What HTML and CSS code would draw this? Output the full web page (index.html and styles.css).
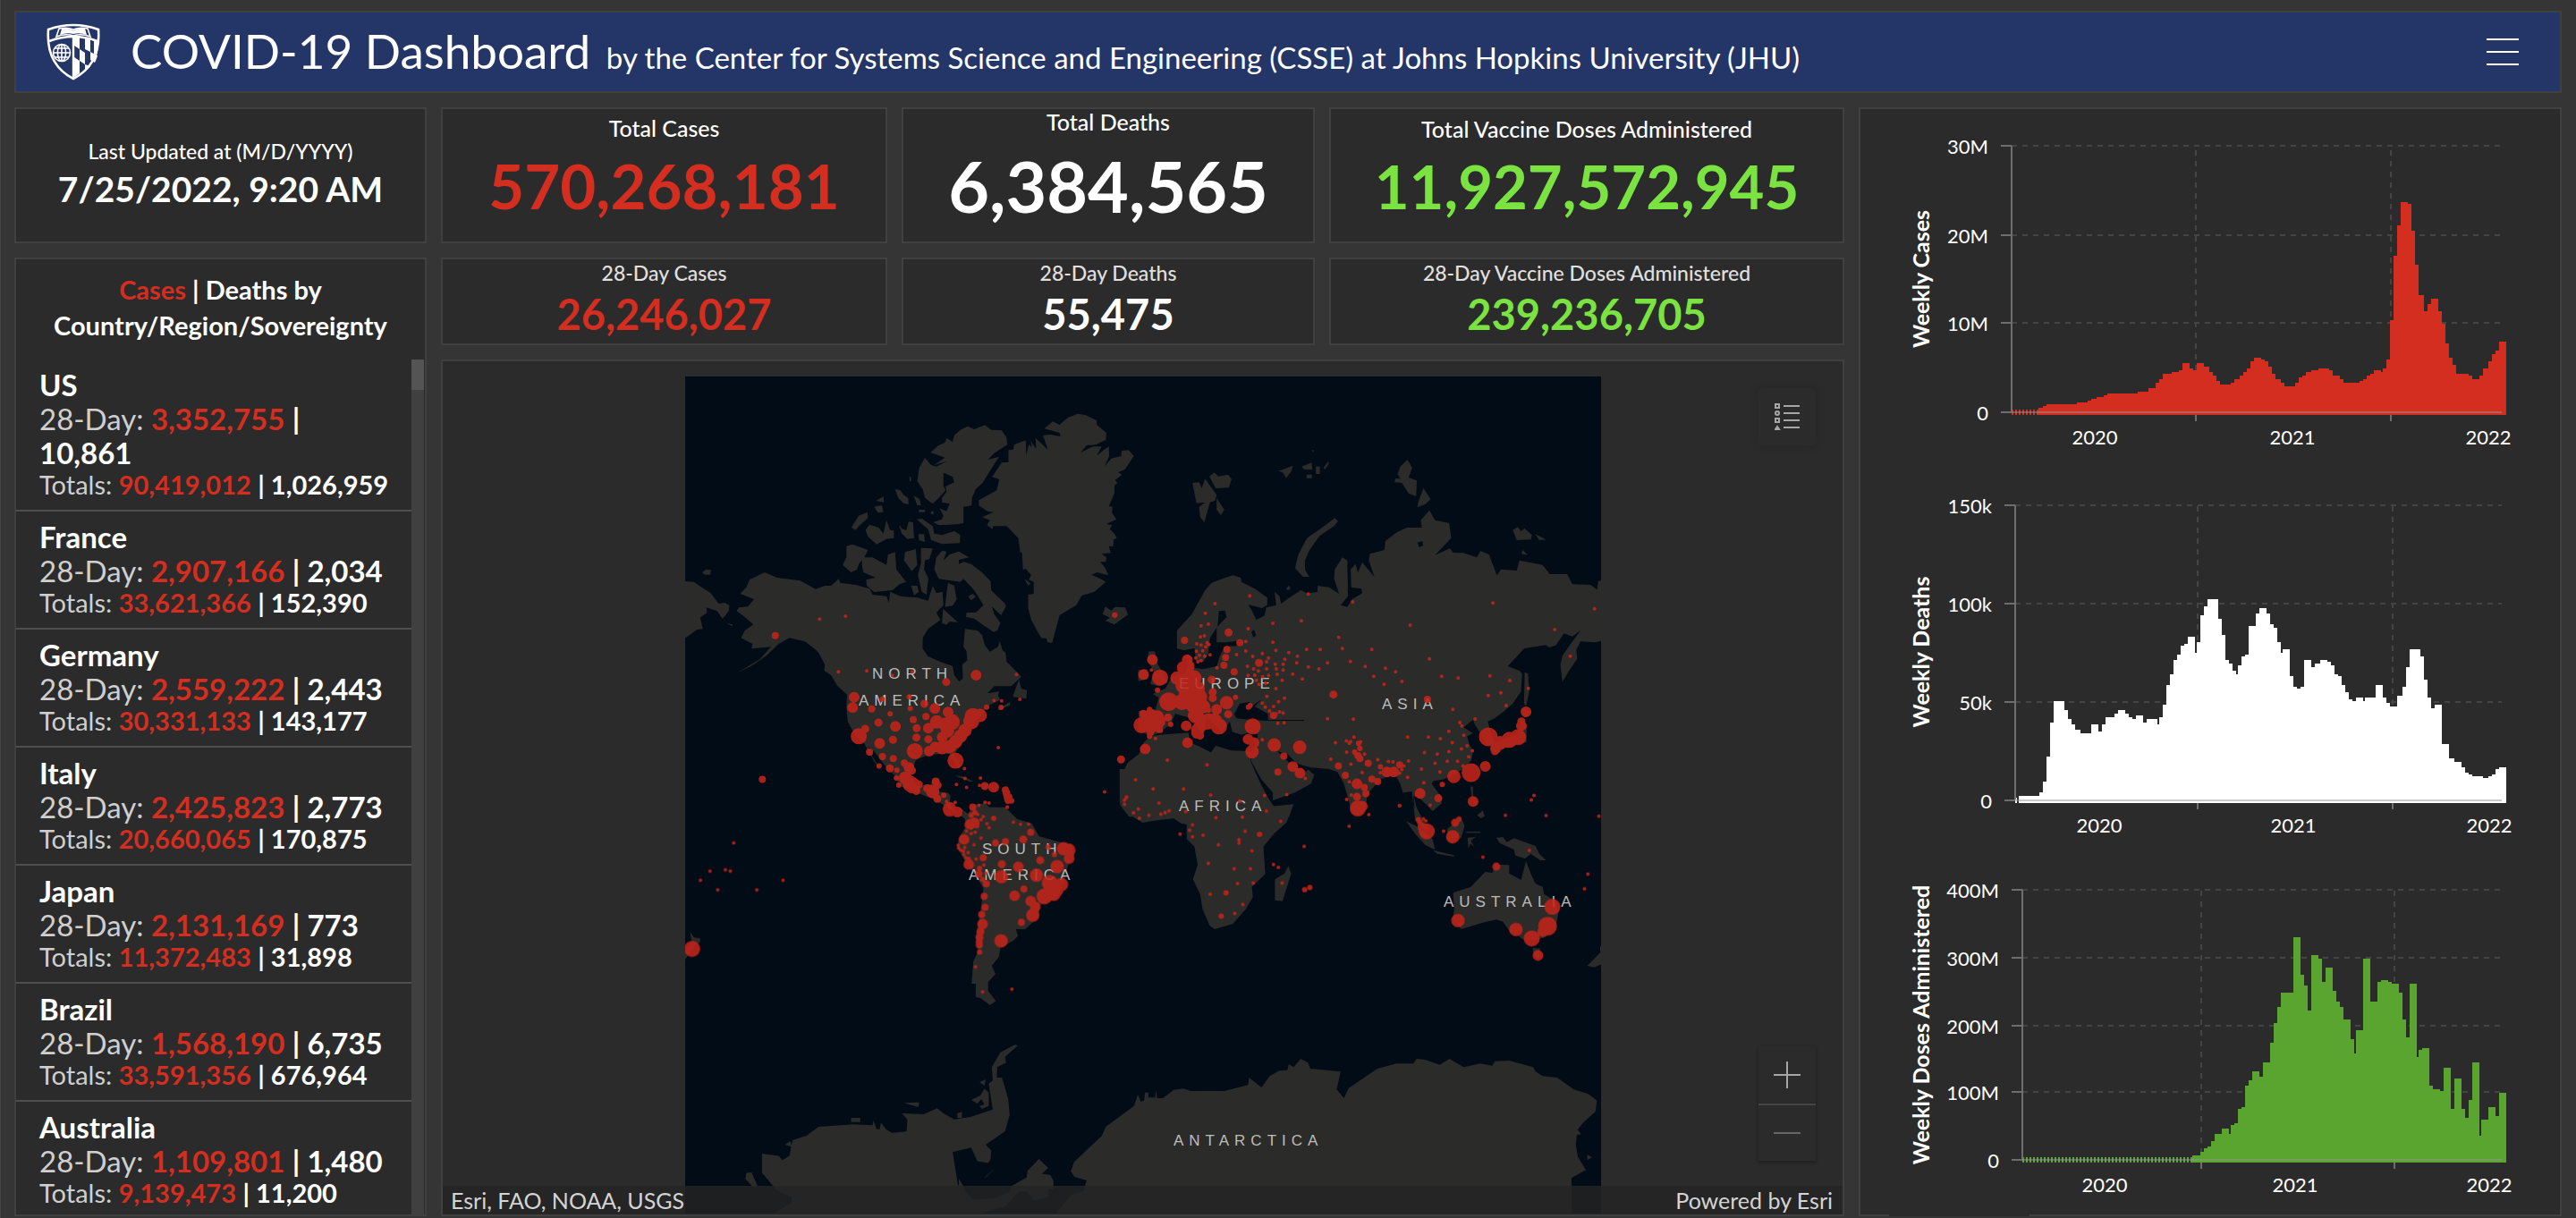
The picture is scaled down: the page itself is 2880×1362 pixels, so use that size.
FILE: index.html
```html
<!DOCTYPE html>
<html lang="en">
<head>
<meta charset="utf-8">
<meta name="viewport" content="width=device-width, initial-scale=1">
<title>COVID-19 Dashboard</title>
<link rel="stylesheet" href="styles.css">
</head>
<body>
<div class="dashboard">
  <header class="topbar">
    <svg class="logo" viewBox="0 0 62 64" aria-hidden="true">
      <path d="M3 7Q31-3 59 7Q62 46 31 62Q0 46 3 7Z" fill="none" stroke="#fff" stroke-width="2.6"/>
      <path d="M4 20Q31 10 58 20" fill="none" stroke="#fff" stroke-width="2.4"/>
      <path d="M12 15L15 6Q24 4 31 7Q38 4 47 6L50 15Q40 11 31 14Q22 11 12 15Z" fill="none" stroke="#fff" stroke-width="1.6"/>
      <path d="M16 13L18 6Q25 5 31 8Q37 5 44 6L46 13Q38 10 31 12Q24 10 16 13Z" fill="#fff"/>
      <path d="M31 16V61" stroke="#fff" stroke-width="2.4"/>
      <g fill="none" stroke="#fff" stroke-width="1.6"><circle cx="18" cy="33" r="9.5"/><ellipse cx="18" cy="33" rx="4.6" ry="9.5"/><path d="M18 23.500V42.500M8.500 33H27.500M10 28H26M10 38H26"/></g>
      <path d="M32 16L38 16V29L32 25ZM44 17L50 18V32L44 29ZM38 29L44 33V46L38 42ZM50 32L58 36Q57 40 55 44L50 41ZM32 38L38 42V56L32 60ZM44 46L50 48Q48 51 44 54ZM54 19L58 20Q59 30 57 36L54 34Z" fill="#fff"/>
    </svg>
    <h1 class="title">COVID-19 Dashboard <small class="subtitle">by the Center for Systems Science and Engineering (CSSE) at Johns Hopkins University (JHU)</small></h1>
    <button class="menu" type="button" aria-label="Menu"><span></span><span></span><span></span></button>
  </header>

  <section class="panel updated">
    <p class="updated-label">Last Updated at (M/D/YYYY)</p>
    <p class="updated-value">7/25/2022, 9:20 AM</p>
  </section>

  <section class="panel kpi"><h2 class="kpi-label">Total Cases</h2><p class="kpi-value size-m red">570,268,181</p></section>
  <section class="panel kpi"><h2 class="kpi-label">Total Deaths</h2><p class="kpi-value size-l">6,384,565</p></section>
  <section class="panel kpi"><h2 class="kpi-label">Total Vaccine Doses Administered</h2><p class="kpi-value size-s green">11,927,572,945</p></section>

  <section class="panel kpi recent"><h2 class="kpi-label">28-Day Cases</h2><p class="kpi-value red">26,246,027</p></section>
  <section class="panel kpi recent"><h2 class="kpi-label">28-Day Deaths</h2><p class="kpi-value">55,475</p></section>
  <section class="panel kpi recent"><h2 class="kpi-label">28-Day Vaccine Doses Administered</h2><p class="kpi-value green">239,236,705</p></section>

  <section class="panel countries">
    <h2 class="countries-title"><span class="red">Cases</span> | Deaths by<br>Country/Region/Sovereignty</h2>
    <div class="countries-body">
      <ul class="country-list">
        <li><h3>US</h3><p class="recent-line">28-Day: <b class="red">3,352,755</b> <b>|<br>10,861</b></p><p class="total-line">Totals: <b class="red">90,419,012</b> <b>| 1,026,959</b></p></li>
        <li><h3>France</h3><p class="recent-line">28-Day: <b class="red">2,907,166</b> <b>| 2,034</b></p><p class="total-line">Totals: <b class="red">33,621,366</b> <b>| 152,390</b></p></li>
        <li><h3>Germany</h3><p class="recent-line">28-Day: <b class="red">2,559,222</b> <b>| 2,443</b></p><p class="total-line">Totals: <b class="red">30,331,133</b> <b>| 143,177</b></p></li>
        <li><h3>Italy</h3><p class="recent-line">28-Day: <b class="red">2,425,823</b> <b>| 2,773</b></p><p class="total-line">Totals: <b class="red">20,660,065</b> <b>| 170,875</b></p></li>
        <li><h3>Japan</h3><p class="recent-line">28-Day: <b class="red">2,131,169</b> <b>| 773</b></p><p class="total-line">Totals: <b class="red">11,372,483</b> <b>| 31,898</b></p></li>
        <li><h3>Brazil</h3><p class="recent-line">28-Day: <b class="red">1,568,190</b> <b>| 6,735</b></p><p class="total-line">Totals: <b class="red">33,591,356</b> <b>| 676,964</b></p></li>
        <li><h3>Australia</h3><p class="recent-line">28-Day: <b class="red">1,109,801</b> <b>| 1,480</b></p><p class="total-line">Totals: <b class="red">9,139,473</b> <b>| 11,200</b></p></li>
      </ul>
      <div class="scrollbar"><div class="thumb"></div></div>
    </div>
  </section>

  <section class="panel map">
    <svg class="world" viewBox="0 0 1024 936" role="img" aria-label="World map of cases">
      <rect width="1024" height="936" fill="#020c17"/>
      <g fill="#2b2b29">
        <g transform="matrix(.3444 0 0 .3333 -16 -11)">
          <path d="M1320 158L1345 162 1382 180 1383 195 1414 222 1412 245 1380 262 1350 264 1330 288 1370 268 1398 268 1384 298 1405 280 1422 268 1423 300 1408 334 1430 308 1462 300 1464 282 1486 280 1503 300 1474 345 1452 355 1465 362 1442 380 1450 390 1440 398 1440 425 1422 468 1434 470 1432 490 1446 512 1414 528 1432 532 1425 545 1440 560 1448 575 1438 580 1436 604 1422 602 1428 625 1398 628 1414 640 1412 655 1394 655 1410 675 1420 700 1384 690 1365 698 1395 712 1412 722 1375 755 1334 768 1316 800 1262 834 1250 880 1238 927 1222 924 1220 912 1202 910 1170 850 1160 810 1160 765 1178 762 1178 722 1162 715 1170 700 1152 678 1143 682 1140 625 1134 622 1128 575 1090 535 1046 535 1044 545 1026 532 1036 515 1010 505 1048 488 1028 485 1000 466 1000 448 1058 415 1066 378 1043 370 1074 322 1096 320 1096 280 1112 278 1114 262 1152 247 1154 298 1162 262 1172 270 1168 250 1186 275 1184 240 1224 278 1208 230 1232 228 1265 234 1262 222 1212 208 1240 184 1262 195 1278 180 1290 170Z"/>
          <path d="M964 200L985 210 1020 196 1040 212 1074 214 1090 238 1092 262 1050 290 1030 312 1066 302 1042 340 1012 390 990 410 978 440 976 466 950 470 950 525 935 528 905 530 870 532 852 522 880 512 885 500 872 475 895 485 905 460 880 455 880 440 895 420 892 402 920 388 915 370 890 358 885 358 885 400 892 415 870 440 850 460 825 440 818 412 800 385 806 340 825 306 845 330 862 335 895 318 855 330 890 305 843 288 868 265 890 255 895 240 915 252 920 230 940 212Z"/>
          <path d="M728 410L745 415 755 430 770 440 772 462 755 458 738 440ZM788 432L808 445 812 465 800 465ZM666 450L690 436 692 455ZM660 470L685 465 690 488 672 490ZM586 540L610 500 638 488 640 508 615 530 600 548ZM632 548L645 530 675 540 690 560 700 515 712 548 724 550 724 575 700 578 668 596 640 570ZM740 530L752 545 765 548 772 520 786 522 790 575 768 578 750 560ZM798 512L815 510 850 535 855 560 880 565 920 552 940 565 938 592 880 595 845 582 835 545ZM804 562L822 562 825 588 806 582ZM805 480H825V488H805ZM775 370h5v14h-5zM845 485h8v10h-8z"/>
          <path d="M570 602L590 596 640 615 628 640 610 662 605 680 585 690 558 665 570 640ZM622 640L655 640 700 665 705 630 728 622 732 680 764 722 742 730 720 750 660 756 636 735 634 715 665 708 625 690 620 665ZM760 622L795 612 800 665 782 686 757 650ZM812 608L850 610 840 645 825 650 822 680 836 710 830 765 815 755 802 700 812 660ZM880 618L895 620 885 650 905 630 935 620 968 640 935 648 935 662 950 655 975 662 1010 690 1038 720 1040 750 1085 795 1088 805 1072 834 1042 805 1050 830 1070 860 1060 885 1048 890 1015 868 985 845 958 840 960 825 990 825 1015 800 985 750 950 712 940 722 870 712 855 680 862 640ZM900 725L920 735 928 780 915 802 890 806 895 760ZM884 812L932 858 905 855 895 866 880 860ZM965 770l15-8 10 10-15 12zM780 735l20 0 5 20-15 12z"/>
          <path d="M305 690L345 708 420 718 470 746 500 735 520 735 545 712 550 725 600 732 645 745 655 765 700 770 708 792 712 755 745 770 800 775 835 785 850 735 862 760 882 755 885 800 862 825 875 850 835 880 818 910 817 945 835 972 880 992 915 1004 920 1035 936 1056 948 1046 946 1000 962 985 960 955 950 940 955 880 995 885 1010 900 1020 935 1036 956 1062 940 1068 920 1076 950 1087 960 1090 990 1100 1000 1138 1040 1105 1072 1050 1072 1028 1096 1066 1090 1062 1105 1070 1118 1025 1140 1010 1170 990 1190 960 1240 935 1280 920 1300 940 1340 935 1350 905 1300 860 1300 830 1305 795 1320 780 1370 800 1408 845 1400 850 1380 872 1382 865 1425 900 1430 908 1440 905 1470 930 1500 965 1500 980 1520 960 1520 930 1500 885 1470 850 1450 800 1430 740 1405 730 1375 700 1345 660 1290 640 1275 655 1310 690 1365 660 1325 628 1265 600 1240 574 1190 570 1140 572 1100 540 1070 520 1035 498 1020 500 1000 480 960 465 945 435 922 385 910 350 930 310 970 260 1005 218 1026 290 980 325 940 262 946 265 930 228 910 240 885 268 865 240 840 214 820 220 808 250 805 270 780 225 762 245 740 255 715Z"/>
          <path d="M1112 1100L1130 1050 1138 1080 1156 1086 1154 1114 1112 1108ZM1060 1150L1102 1124 1100 1136 1065 1152ZM922 1372L950 1375 982 1392 970 1392ZM46 720L75 722 100 740 130 760 155 795 175 792 190 800 188 820 168 846 150 820 115 808 118 825 95 842 104 880 85 882 46 912ZM102 690L115 680 130 682 128 698 110 698ZM1410 805L1430 818 1442 806 1475 808 1484 832 1440 865 1410 852 1425 842 1402 830ZM180 860l20 5v6zM1148 712l20 15-8 8z"/>
        </g>
        <g transform="matrix(.3699 0 0 .3333 474 -11)">
          <path d="M252 390L272 388 280 408 290 376 325 430 320 450 305 455 288 522 275 505 272 470 290 455 264 458ZM303 368L318 355 330 368 360 362 370 378 362 406 322 408ZM325 440L348 480 338 498 325 480ZM512 350L556 332 550 352 535 374 525 355ZM582 335L612 322 614 345 590 345ZM625 335h12v25h-12zM648 340L662 318 664 326 652 345ZM597 362h16v12h-16zM612 280l6 0v8zM902 312L916 340 905 372 930 382 928 435 905 425 885 390 863 388 865 375 880 376 872 360 880 335ZM950 408L972 445 955 462 932 472 934 455ZM682 508L692 518 680 535 636 568 606 615 592 650 592 680 605 706 585 704 562 676 572 630 598 575 650 535ZM1220 548L1235 538 1245 552 1255 542 1278 565 1275 580 1232 582ZM1288 562L1320 580 1300 582ZM1250 615L1265 632 1246 628ZM535 745l8-10 6 8-8 8z"/>
          <path d="M375 700L398 708 400 722 440 745 478 775 478 800 462 810 420 798 430 815 445 850 470 835 475 808 505 800 500 755 515 770 520 795 545 775 580 750 600 762 630 755 630 735 665 740 695 762 680 710 682 680 705 640 720 650 722 770 700 800 720 806 735 780 765 760 762 745 732 740 730 680 745 662 752 690 765 656 802 706 785 650 788 628 832 615 835 585 870 555 900 540 945 540 942 515 968 482 985 515 1028 525 1034 575 985 632 1030 610 1040 624 1070 625 1112 640 1122 618 1148 630 1172 700 1185 680 1232 684 1240 650 1310 665 1332 696 1385 696 1400 730 1455 732 1475 748 1478 720 1487 718V920L1470 925 1425 922 1412 950 1415 980 1390 1020 1370 1058 1364 1000 1370 970 1395 930 1425 885 1400 905 1375 895 1350 935 1330 942 1320 934 1255 945 1205 1005 1240 1020 1248 1030 1245 1090 1220 1130 1195 1155 1165 1180 1145 1190 1150 1215 1165 1265 1140 1270 1125 1235 1105 1200 1100 1185 1072 1210 1100 1230 1082 1240 1088 1265 1100 1290 1095 1320 1070 1350 1030 1375 1010 1385 980 1390 975 1400 1005 1445 1005 1465 978 1492 960 1470 940 1450 920 1440 920 1470 935 1520 925 1520 915 1425 888 1430 880 1400 868 1375 850 1372 820 1385 780 1435 775 1490 755 1505 735 1500 720 1440 710 1400 690 1360 665 1350 610 1345 590 1340 600 1350 620 1370 610 1400 560 1430 495 1455 495 1430 460 1385 430 1325 425 1300 440 1270 450 1235 430 1225 400 1235 372 1225 365 1190 340 1230 310 1190 295 1165 285 1240 250 1180 200 1165 185 1200 150 1230 120 1240 88 1215 90 1155 140 1150 150 1110 132 1098 170 1080 190 1040 230 1030 240 1000 230 970 250 975 255 1010 285 1015 325 1005 335 970 350 938 400 936 400 918 355 925 325 925 325 875 355 840 350 818 332 820 328 870 305 910 300 960 285 990 262 985 258 945 225 952 205 945 205 885 250 830 290 750 310 725 345 710Z"/>
          <path d="M150 1235L240 1228 245 1262 270 1272 308 1295 322 1272 370 1288 425 1290 428 1325 470 1430 497 1475 555 1468 545 1510H60L33 1470V1385L55 1330 90 1300 105 1260 125 1240ZM120 955L138 955 148 1000 178 1060 150 1072 125 1065 135 1020 115 985ZM88 1018L115 1015 118 1048 88 1055ZM1248 1180L1262 1200 1262 1260 1205 1275 1165 1300 1150 1270 1200 1245 1235 1235ZM1245 1145L1278 1158 1255 1178ZM1256 1025L1266 1030 1270 1090 1260 1140 1254 1130ZM1092 1408L1100 1410 1100 1440 1115 1470 1098 1465Z"/>
          <path d="M378 1165L395 1130 425 1125 430 1140 462 1115 440 1140 480 1165 480 1185H589V1188H480L430 1185 385 1180ZM508 1290L540 1300 565 1330 605 1345 595 1360 570 1345 545 1330ZM932 590l15-5 2 15-12 6zM430 890l8-8 6 20-8 6z" fill="#020c17"/>
        </g>
        <g transform="matrix(.3444 0 0 .3333 -16 439)">
          <path d="M945 135L965 150 985 120 1020 115 1035 128 1085 128 1125 168 1172 182 1195 225 1245 240 1300 255 1310 290 1290 320 1270 400 1255 430 1200 455 1190 500 1150 538 1120 536 1127 560 1112 575 1070 600 1065 630 1042 660 1054 688 1030 715 1030 745 1055 778 1036 792 1005 768 990 765 990 720 976 720 982 645 998 610 990 560 1005 480 1015 400 985 350 955 310 930 260 935 230 960 190ZM62 545L75 565 95 568 95 580 80 590 46 640V610L68 580Z"/>
          <path d="M296 1290L350 1298 362 1312 385 1298 395 1245 440 1230 480 1200 590 1192 655 1195 658 1178 668 1208 678 1208 682 1186 700 1210 718 1220 765 1216 768 1175 750 1155 820 1158 865 1138 885 1155 920 1175 975 1166 1045 1142 1032 1055 1045 1045 1042 1000 1070 950 1118 924 1126 928 1085 965 1088 985 1060 1000 1058 1035 1075 1035 1095 1105 1100 1160 1085 1215 1022 1260 1040 1280 1038 1310 1030 1322 995 1316 975 1270 915 1285 932 1395 950 1410 980 1445 1050 1440 1100 1420 1105 1400 1155 1370 1158 1348 1195 1308 1225 1338 1205 1358 1232 1362 1242 1382V1408L1225 1410V1435L1182 1448 1155 1416 1130 1418 1085 1468 1010 1488V1500H320L392 1455V1435L345 1415 296 1355ZM756 1120L806 1118 804 1134ZM585 1170h30v14h-30zM245 1355L262 1353 282 1400 268 1404 242 1375ZM975 1110L1005 1095 1018 1072 1032 1085V1130L1010 1140 1002 1130 1018 1125 1008 1108 995 1122ZM1018 1370L1055 1338 1022 1370ZM370 1260l18-12 5 20zM1002 1050l20-8-4 20zM935 1375l22 35h-22zM930 1155l15-5v20h-15z"/>
        </g>
        <g transform="matrix(.5357 0 0 .3333 474 439)">
          <path d="M22 0V110L50 160 70 180 100 172 135 166 150 182 162 185V235L178 260 185 320 175 370 190 420 195 470 210 525 220 537 258 520 285 470 300 430 298 395 326 352 322 260 345 215 370 180 385 118 345 130 335 105 300 0ZM374 325L380 350 362 443 346 440V370L366 350ZM636 90L642 130 655 170 668 200 660 205 645 180 638 140ZM620 175L640 190 675 235 680 270 660 255 640 220ZM676 272L722 290 718 293 685 284ZM706 200L735 165 742 190 735 230 715 250 705 235ZM748 230L765 228 755 240 762 262 754 250 750 268ZM745 210h30v4h-30zM768 155L780 138 784 158 776 165ZM808 230L822 228 830 245 845 232 890 258 898 285 912 306 900 306 880 285 868 300 848 290 845 270 815 248ZM870 308L880 350 890 385 905 395 908 420 930 440 938 480 932 530 910 565 880 575 862 570 845 545 838 550 822 512 808 505 780 515 735 537 718 500 720 470 718 415 755 395 770 370 785 345 800 348 805 320 835 322V350L860 372ZM884 600L900 602 896 635 886 625ZM1027 612V655L1012 665 998 660Z"/>
          <path d="M-116 1500L-80 1430-53 1416-47 1380-72 1368-80 1350-73 1318-15 1230-7 1200 52 1130 60 1092 66 1115 73 1112 75 1085 82 1085 82 1102 96 1102 98 1075 100 1104 112 1104 135 1076 155 1072 170 1080 240 1080 290 1060 292 1035 318 1068 335 1030 355 1012 372 1010 375 990 385 1000 400 972 415 985 420 1005 483 1015 475 1075 490 1104 500 1070 560 1005 600 988 635 988 642 972 660 975 690 992 710 972 740 1000 775 988 800 995 805 980 835 978 885 1000 890 1015 905 1030 935 1035 970 1075 1000 1090 1018 1112 1015 1150 990 1185 978 1210 985 1225 976 1228 974 1260 978 1300 995 1345 965 1372 966 1500ZM998 1294l10 8-10 10z"/>
        </g>
      </g>
      <g class="continents">
        <text x="209" y="338">NORTH</text><text x="194" y="368">AMERICA</text>
        <text x="552" y="349">EUROPE</text><text x="779" y="372">ASIA</text>
        <text x="552" y="486">AFRICA</text><text x="332" y="534">SOUTH</text><text x="317" y="563">AMERICA</text>
        <text x="848" y="593">AUSTRALIA</text><text x="546" y="860">ANTARCTICA</text>
      </g>
      <g class="dots">
        <g transform="matrix(.3444 0 0 .3333 -16 -11)">
          <path class="s1" d="M483 847h.1M567 837h.1M544 1024h.1M636 1021h.1M719 1036h.1M783 1024h.1M1122 1033h.1M1133 1116h.1M1063 1278h.1M1049 1120h.1M1074 1121h.1M953 1349h.1M955 1382h.1M1005 1380h.1M927 1402h.1M960 1412h.1M1408 1427h.1M1002 1405h.1M1020 1462h.1M1033 1464h.1M1092 1478h.1M923 1462h.1M895 1459h.1M1000 1472h.1"/>
          <path class="s2" d="M1441 833h.1M686 1115h.1M774 1108h.1M712 1165h.1M777 1147h.1M1025 1142h.1M1072 1143h.1M676 1340h.1M734 1354h.1M1106 1457h.1M886 1438h.1M732 1380h.1M740 1404h.1"/>
          <path class="s3" d="M339 902h.1M297 1385h.1M652 1148h.1M787 1184h.1M828 1174h.1M687 1308h.1M722 1315h.1M645 1293h.1M758 1330h.1M980 1478h.1M1090 1430h.1M1097 1444h.1M1086 1420L1095 1455"/>
          <path class="s4" d="M894 1058h.1M674 1194h.1M798 1213h.1M823 1131h.1M797 1244h.1M836 1250h.1M721 1252h.1M711 1348h.1M631 1215h.1M783 1355h.1M1019 1407h.1M860 1392h.1M866 1404h.1M805 1402h.1M832 1415h.1M797 1424h.1M755 1375h.1M865 1450h.1"/>
          <path class="s5" d="M595 1109h.1M590 1144h.1M991 1035h.1M857 1147h.1M900 1159h.1M836 1213h.1M678 1264h.1M729 1207h.1M839 1290h.1M881 1243h.1M773 1345h.1M1048 1411h.1M858 1276h.1M930 1494h.1"/>
          <path class="s6" d="M863 1192h.1M880 1278h.1M905 1275h.1M925 1258h.1M940 1240h.1M955 1220h.1M898 1222h.1M762 1380h.1M850 1425h.1M905 1483h.1M1004 1170h.1M890 1200h.1"/>
          <path class="s7" d="M610 1240h.1M792 1290h.1M924 1322h.1M980 1172h.1M975 1190h.1M778 1400h.1M912 1192h.1M785 1405h.1"/>
        </g>
        <g transform="matrix(.3699 0 0 .3333 474 -11)">
          <path class="s1" d="M425 769h.1M320 795h.1M291 827h.1M278 869h.1M300 864h.1M602 763h.1M736 789h.1M1160 793h.1M1467 812h.1M910 867h.1M1347 882h.1M495 861h.1M581 853h.1M420 879h.1M694 908h.1M276 907h.1M288 903h.1M265 930h.1M278 934h.1M292 940h.1M302 932h.1M296 926h.1M264 955h.1M283 953h.1M273 968h.1M289 971h.1M305 967h.1M268 990h.1M278 986h.1M262 977h.1M385 966h.1M413 922h.1M413 954h.1M434 972h.1M463 962h.1M482 977h.1M504 952h.1M495 925h.1M531 982h.1M543 959h.1M569 971h.1M597 949h.1M638 949h.1M705 946h.1M794 949h.1M968 980h.1M1394 971h.1M476 990h.1M502 998h.1M526 998h.1M567 994h.1M602 1007h.1M660 994h.1M729 989h.1M774 1006h.1M634 1014h.1M835 1012h.1M866 1024h.1M418 1005h.1M437 1014h.1M451 1021h.1M476 1014h.1M505 1014h.1M526 1018h.1M555 1031h.1M508 1032h.1M482 1036h.1M464 1040h.1M440 1035h.1M420 1036h.1M523 1052h.1M584 1048h.1M445 1052h.1M473 1062h.1M453 1066h.1M504 1080h.1M477 1106h.1M530 1112h.1M512 1124h.1M463 1129h.1M472 1142h.1M497 1140h.1M485 1155h.1M515 1158h.1M526 1162h.1M505 1165h.1M800 1039h.1M831 1066h.1M885 1056h.1M1005 1039h.1M1055 1045h.1M1151 1037h.1M1211 1053h.1M1184 1094h.1M1146 1103h.1M1200 1137h.1M1267 1079h.1M1039 1150h.1M1106 1182h.1M738 1183h.1M660 1181h.1M510 1196h.1M529 1195h.1M1060 1194h.1M1066 1205h.1M1027 1223h.1M1072 1237h.1M1001 1248h.1M965 1243h.1M902 1243h.1M1037 1262h.1M1082 1272h.1M1065 1283h.1M1098 1289h.1M1027 1292h.1M992 1300h.1M953 1295h.1M1087 1309h.1M1053 1324h.1M1022 1324h.1M985 1331h.1M944 1350h.1M905 1323h.1M1000 1360h.1M951 1396h.1M1070 1340h.1M463 1252h.1M684 1262h.1M717 1256h.1M740 1243h.1M726 1264h.1M730 1258h.1M760 1259h.1M718 1293h.1M772 1300h.1M731 1334h.1M670 1317h.1M812 1319h.1M844 1325h.1M858 1326h.1M765 1362h.1M726 1393h.1M902 1378h.1M878 1364h.1M891 1340h.1M885 1352h.1M820 1362h.1M718 1452h.1M732 1437h.1M878 1473h.1M1284 1439h.1M1276 1454h.1M176 1320h.1M296 1336h.1M80 1386h.1M133 1417h.1M225 1417h.1M307 1437h.1M396 1458h.1M470 1439h.1M537 1436h.1M593 1382h.1M140 1247h.1M53 1444h.1M326 1010h.1M128 1018h.1"/>
          <path class="s2" d="M17 833h.1M146 1085h.1M186 1200h.1M382 1109h.1M426 1137h.1M421 1142h.1M1007 1402h.1M758 1281h.1M754 1264h.1M742 1293h.1M300 1152h.1M820 1343h.1M122 1240h.1M155 1220h.1M122 1150h.1"/>
          <path class="s3" d="M228 918h.1M356 949h.1M347 1002h.1M378 1024h.1M352 976h.1M395 926h.1M693 1340h.1M714 1371h.1M812 1392h.1M776 1433h.1M510 1360h.1M528 1307h.1M783 1331h.1M878 1336h.1M794 1384h.1M497 1170h.1M752 1305h.1M758 1315h.1M771 1412h.1M962 1116h.1M125 1228h.1"/>
          <path class="s4" d="M361 892h.1M453 994h.1M678 1100h.1M310 1050h.1M360 1166h.1M313 1092h.1M313 1112h.1M995 1448h.1M36 1318h.1M749 1443h.1M103 1165h.1M1166 1290h.1M150 1215h.1M178 1177h.1M1246 1190h.1M275 1238h.1"/>
          <path class="s5" d="M104 1033h.1M131 983h.1M940 1432h.1M749 1400h.1M840 1360h.1M860 1360h.1M438 1262h.1M325 1150h.1M1246 1205h.1M1100 1459h.1M237 1262h.1M109 1283h.1M577 1364h.1M555 1342h.1M236 983h.1M1137 1341h.1M1260 1158h.1M420 1250h.1M233 1205h.1M265 1230h.1M1168 1282h.1M765 1475h.1M125 1165h.1"/>
          <path class="s6" d="M1042 1375h.1M499 1269h.1M576 1277h.1M355 1127h.1M432 1292h.1M120 1190h.1M150 1190h.1M145 1175h.1M225 1010h.1M238 1005h.1M205 1045h.1M1182 1262h.1M1205 1256h.1M285 1140h.1M268 1218h.1M125 1208h.1"/>
          <path class="s7" d="M154 1043h.1M434 1207h.1M98 1203h.1M240 1040h.1M255 1045h.1M225 1070h.1M265 1080h.1M235 1100h.1M272 1108h.1M220 1125h.1M255 1135h.1M250 1070h.1M262 1170h.1M280 1195h.1M300 1190h.1M332 1207h.1M318 1190h.1M1236 1243h.1M1210 1252h.1"/>
          <path class="s8" d="M1094 1362h.1M180 1124h.1M1146 1242h.1"/>
        </g>
        <g transform="matrix(.3444 0 0 .3333 -16 439)">
          <path class="s1" d="M204 248h.1M177 338h.1M193 342h.1M127 342h.1M96 373h.1M152 405h.1M279 405h.1M364 373h.1M1107 738h.1M1012 747h.1M989 663h.1M1112 178h.1M1135 185h.1M1161 185h.1M1014 159h.1M1007 170h.1M1026 183h.1M1033 197h.1M1007 231h.1M984 254h.1M965 280h.1M951 287h.1M991 302h.1M1016 322h.1M1022 350h.1M960 208h.1M975 216h.1M988 212h.1M954 263h.1M940 272h.1M933 255h.1M934 265h.1M1092 128h.1M975 198h.1M996 152h.1M950 275h.1M958 297h.1M968 300h.1"/>
          <path class="s2" d="M1048 165h.1M1225 262h.1M1245 287h.1M1002 333h.1M1002 614h.1M980 128h.1M987 146h.1M975 155h.1M1105 106h.1M1012 370h.1M993 190h.1"/>
          <path class="s3" d="M1138 514h.1M1017 427h.1M1020 464h.1M1009 488h.1M1146 402h.1M1168 212h.1M1024 385h.1M1000 352h.1M1054 248h.1M1086 243h.1M1014 297h.1M1001 590h.1M1001 580h.1"/>
          <path class="s4" d="M1074 319h.1M1144 236h.1M1199 306h.1M1005 545h.1M930 147h.1M1002 565h.1M966 187h.1"/>
          <path class="s5" d="M1128 328h.1M1116 425h.1M952 236h.1M967 320h.1M972 185h.1M985 180h.1M1168 443h.1M1183 462h.1M1012 520h.1M1293 300h.1"/>
          <path class="s6" d="M905 137h.1M1073 361h.1M1187 356h.1M1254 327h.1M1072 576h.1M1175 490h.1M1268 387h.1M1243 420h.1M1292 272h.1M1275 267h.1"/>
          <path class="s7" d="M69 603h.1M1230 382h.1M1213 427h.1M1240 395h.1M1248 405h.1"/>
        </g>
        <g transform="matrix(.5357 0 0 .3333 474 439)">
          <path class="s1" d="M272 108h.1M36 95h.1M32 104h.1M32 118h.1M104 114h.1M61 134h.1M51 147h.1M83 155h.1M108 151h.1M117 146h.1M125 140h.1M160 142h.1M63 165h.1M223 163h.1M278 161h.1M328 141h.1M358 175h.1M174 187h.1M168 205h.1M174 227h.1M196 222h.1M148 218h.1M284 208h.1M228 254h.1M271 237h.1M271 248h.1M298 274h.1M207 316h.1M261 334h.1M295 334h.1M268 384h.1M301 382h.1M361 382h.1M211 420h.1M279 454h.1M262 484h.1M343 320h.1M353 330h.1M407 259h.1M501 192h.1M606 123h.1M670 121h.1M827 155h.1M912 156h.1M1022 158h.1M780 295h.1M999 352h.1M992 402h.1M877 273h.1M698 208h.1M542 153h.1M656 167h.1M661 174h.1"/>
          <path class="s2" d="M314 219h.1M244 415h.1M234 493h.1M408 405h.1M419 397h.1M730 168h.1M645 170h.1M648 178h.1"/>
          <path class="s4" d="M808 327h.1M722 180h.1M652 192h.1"/>
          <path class="s5" d="M895 625h.1M905 545h.1M656 200h.1"/>
          <path class="s6" d="M717 227h.1M728 508h.1M849 538h.1"/>
          <path class="s7" d="M663 209h.1M882 568h.1M925 462h.1M519 132h.1M1042 603h.1"/>
          <path class="s8" d="M915 527h.1"/>
        </g>
      </g>
    </svg>
    <button class="map-button legend" type="button" aria-label="Legend">
      <svg viewBox="0 0 28 30" width="28" height="30" aria-hidden="true" fill="none" stroke="#a6a6a6" stroke-width="2"><path d="M1 1H5V5H1ZM1 17H5V21H1ZM10 3H28M10 11H28M10 19H28M10 27H28"/><circle cx="3" cy="11" r="2"/><path d="M3 26L5 29H1Z"/></svg>
    </button>
    <div class="zoom">
      <button class="map-button" type="button" aria-label="Zoom in"><svg viewBox="0 0 30 30" width="30" height="30" aria-hidden="true"><path d="M15 0V30M0 15H30" stroke="#a6a6a6" stroke-width="2"/></svg></button>
      <button class="map-button" type="button" aria-label="Zoom out" disabled><svg viewBox="0 0 30 30" width="30" height="30" aria-hidden="true"><path d="M0 15H30" stroke="#666" stroke-width="2"/></svg></button>
    </div>
    <footer class="attribution"><span>Esri, FAO, NOAA, USGS</span><span>Powered by <a href="https://www.esri.com">Esri</a></span></footer>
  </section>

  <section class="panel charts">
    <svg class="chart" viewBox="0 0 782 398" role="img" aria-label="Weekly Cases">
      <path class="grid" d="M169 41H717M169 141H717M169 239H717"/><path class="grid tall" d="M375 46V339M593 46V339"/>
      <path d="M169 339H199" stroke="#d32e20" stroke-width="6" stroke-dasharray="2 2"/>
      <path fill="#d32e20" shape-rendering="crispEdges" transform="matrix(.5102 0 0 .3333 0 -122)" d="M390 1392V1368H400V1362H408V1356H474V1350H498V1344H506V1338H517V1332H533V1326H541V1320H608V1314H631V1302H647V1284H655V1272H662V1254H682V1248H698V1242H706V1218H721V1236H729V1242H737V1218H753V1230H764V1248H772V1260H780V1278H788V1290H811V1284H819V1272H831V1260H839V1248H847V1236H855V1212H862V1200H878V1206H886V1212H894V1230H902V1254H909V1272H921V1284H929V1296H953V1284H960V1266H968V1260H976V1248H988V1242H1004V1236H1027V1242H1035V1260H1051V1272H1058V1284H1094V1278H1102V1272H1109V1260H1117V1254H1125V1242H1141V1248H1145V1236H1152V1206H1160V1074H1168V858H1176V756H1184V678H1200V684H1207V774H1215V888H1223V990H1235V1044H1243V1020H1250V1002H1266V1044H1274V1086H1282V1152H1290V1200H1298V1224H1305V1254H1333V1260H1341V1272H1356V1260H1364V1236H1376V1212H1384V1188H1392V1176H1399V1146H1415V1392Z"/>
      <path class="axis" d="M169 41V338M157 41H169M157 141H169M157 239H169M157 339H169M375 342V349M593 342V349"/><path class="base" d="M169 339H717"/>
      <g class="ylabels"><text x="143" y="50">30M</text><text x="143" y="150">20M</text><text x="143" y="248">10M</text><text x="143" y="348">0</text></g>
      <g class="xlabels"><text x="262" y="375">2020</text><text x="483" y="375">2021</text><text x="702" y="375">2022</text></g>
      <text class="ytitle" transform="translate(77 190) rotate(-90)">Weekly Cases</text>
    </svg>
    <svg class="chart" viewBox="0 0 782 420" role="img" aria-label="Weekly Deaths">
      <path class="grid" d="M173 45H717M173 155H717M173 265H717"/><path class="grid tall" d="M377 46V375M595 46V375"/>
      <path fill="#fff" shape-rendering="crispEdges" transform="matrix(.5102 0 0 .3333 0 0)" d="M339 1134V1116H343V1134H347V1110H392V1098H400V1062H408V978H416V864H423V792H447V822H455V852H463V870H470V888H482V900H506V870H521V894H529V870H537V846H557V834H564V822H580V834H588V846H596V852H604V840H619V864H627V852H651V870H655V846H662V804H670V738H678V702H686V654H694V636H702V606H710V600H717V576H733V630H737V594H745V504H753V474H760V450H784V516H792V570H800V654H808V666H815V690H823V702H827V672H835V642H843V636H851V540H866V498H874V480H890V498H898V534H906V546H913V594H921V630H925V618H941V708H949V744H956V750H964V744H972V654H988V678H996V666H1007V654H1023V660H1031V672H1039V702H1047V708H1054V738H1062V762H1070V786H1078V792H1086V780H1102V792H1105V780H1129V738H1145V780H1152V798H1160V810H1176V774H1188V744H1196V678H1203V618H1227V642H1235V720H1243V780H1250V816H1258V804H1274V936H1290V984H1301V996H1317V1014H1325V1032H1333V1038H1341V1044H1364V1050H1376V1044H1384V1038H1392V1020H1399V1014H1415V1134Z"/>
      <path class="axis" d="M173 45V374M161 45H173M161 155H173M161 265H173M161 375H173M377 378V385M595 378V385"/><path class="base" d="M173 375H717"/>
      <g class="ylabels"><text x="147" y="54">150k</text><text x="147" y="164">100k</text><text x="147" y="274">50k</text><text x="147" y="384">0</text></g>
      <g class="xlabels"><text x="267" y="411">2020</text><text x="484" y="411">2021</text><text x="703" y="411">2022</text></g>
      <text class="ytitle" transform="translate(77 209) rotate(-90)">Weekly Deaths</text>
    </svg>
    <svg class="chart" viewBox="0 0 782 418" role="img" aria-label="Weekly Doses Administered">
      <path class="grid" d="M181 55H717M181 131H717M181 207H717M181 281H717"/><path class="grid tall" d="M381 56V357M597 56V357"/>
      <path d="M181 357H371" stroke="#5aa530" stroke-width="6" stroke-dasharray="2 2"/>
      <path fill="#5aa530" shape-rendering="crispEdges" transform="matrix(.5102 0 0 .3333 0 0)" d="M727 1080V1056H745V1044H753V1032H760V1026H768V1008H776V984H792V966H808V984H811V954H819V948H827V900H835V894H843V822H851V804H858V774H874V792H882V744H898V678H906V612H913V558H921V510H949V324H964V450H972V486H980V570H988V384H1004V396H1011V474H1019V426H1035V504H1043V540H1051V558H1058V600H1074V666H1082V714H1086V636H1102V396H1117V540H1133V474H1141V468H1156V474H1164V480H1180V510H1188V600H1196V660H1203V480H1219V726H1223V702H1231V696H1247V822H1254V834H1270V840H1278V762H1294V900H1301V798H1317V900H1325V930H1333V870H1341V744H1356V990H1360V936H1376V894H1392V924H1399V846H1415V1080Z"/>
      <path class="axis" d="M181 55V356M169 55H181M169 131H181M169 207H181M169 281H181M169 357H181M381 360V367M597 360V367"/><path class="base" d="M181 357H717"/>
      <g class="ylabels"><text x="155" y="64">400M</text><text x="155" y="140">300M</text><text x="155" y="216">200M</text><text x="155" y="290">100M</text><text x="155" y="366">0</text></g>
      <g class="xlabels"><text x="273" y="393">2020</text><text x="486" y="393">2021</text><text x="703" y="393">2022</text></g>
      <text class="ytitle" transform="translate(77 206) rotate(-90)">Weekly Doses Administered</text>
    </svg>
  </section>
</div>
</body>
</html>
```
FILE: styles.css
```css
* { box-sizing: border-box; }
body, h1, h2, h3, p, ul { margin: 0; padding: 0; }
body {
  background: #353535;
  color: #fff;
  font-family: Lato, "Open Sans", sans-serif;
  border-left: 1px solid #444;
  overflow: hidden;
}
button { font: inherit; color: inherit; border: 0; padding: 0; background: none; cursor: pointer; }
.red { color: #d32e20; }
.green { color: #7ae341; }

.dashboard {
  height: 100vh;
  padding: 12px 16px 2px 15px;
  display: grid;
  gap: 16px;
  grid-template-columns: 461fr 499fr 462fr 576fr 786fr;
  grid-template-rows: 92px 152px 98px minmax(0, 1fr);
  grid-template-areas:
    "head head head head head"
    "date a b c charts"
    "list d e f charts"
    "list map map map charts";
}
.panel { background: #2b2b2b; border: 2px solid #404040; min-width: 0; min-height: 0; }

.topbar {
  grid-area: head;
  display: flex;
  align-items: center;
  background: #243568;
  border: 2px solid #404040;
  padding: 0 46px 0 33px;
}
.logo { width: 62px; height: 64px; flex: none; }
.title { flex: 1; margin-left: 33px; padding-top: 4px; font-size: 53px; line-height: 72px; font-weight: 400; white-space: nowrap; }
.subtitle { font-size: 33px; font-weight: 400; margin-left: 4px; }
.menu { width: 36px; height: 30px; display: flex; flex-direction: column; justify-content: space-between; }
.menu span { height: 2px; background: #fff; }

.updated { grid-area: date; display: flex; flex-direction: column; justify-content: center; padding-bottom: 6px; text-align: center; }
.updated-label { font-size: 23px; line-height: 36px; font-weight: 500; }
.updated-value { font-size: 39px; line-height: 48px; font-weight: 700; }

.kpi { display: flex; flex-direction: column; justify-content: center; padding-bottom: 4px; text-align: center; }
.kpi-label { font-size: 25px; line-height: 28px; font-weight: 500; }
.kpi-value { font-size: 47px; line-height: 64px; font-weight: 700; }
.size-s { font-size: 67px; line-height: 100px; }
.size-m { font-size: 69px; line-height: 102px; }
.size-l { font-size: 79px; line-height: 116px; }
.recent { padding-bottom: 0; }
.recent .kpi-label { color: #e0e0e0; font-size: 23px; }

.countries { grid-area: list; position: relative; display: flex; flex-direction: column; overflow: hidden; }
.countries-title { padding: 14px 0 18px; font-size: 29px; line-height: 40px; font-weight: 700; text-align: center; }
.countries-body { flex: 1; min-height: 0; display: flex; padding-right: 1px; }
.country-list { flex: 1; min-height: 0; overflow: hidden; list-style: none; white-space: nowrap; }
.country-list li { padding: 9px 0 11px 26px; border-bottom: 2px solid #4f4f4f; color: #cfcfcf; }
.country-list h3 { font-size: 33px; line-height: 38px; font-weight: 700; color: #fff; }
.country-list b { font-weight: 700; color: #fff; }
.country-list b.red { color: #d32e20; }
.recent-line { font-size: 33px; line-height: 38px; }
.total-line { font-size: 29px; line-height: 34px; }
.scrollbar { width: 14px; background: #404040; }
.thumb { height: 34px; background: #545454; }

.map { grid-area: map; position: relative; display: flex; justify-content: center; padding-top: 17px; overflow: hidden; }
.world { width: 1024px; max-width: 100%; height: 936px; margin-left: 1px; flex: none; }
.continents { fill: #bdbdbb; font: 17px "Liberation Sans", Arial, sans-serif; letter-spacing: 6px; }
.dots { fill: none; stroke: #c5251a; stroke-linecap: round; opacity: .87; }
.dots path { vector-effect: non-scaling-stroke; }
.s1 { stroke-width: 4px; }
.s2 { stroke-width: 6px; }
.s3 { stroke-width: 8px; }
.s4 { stroke-width: 9px; }
.s5 { stroke-width: 12px; }
.s6 { stroke-width: 15px; }
.s7 { stroke-width: 18px; }
.s8 { stroke-width: 21px; }
.map-button { display: flex; align-items: center; justify-content: center; width: 64px; height: 64px; background: #2b2b2b; box-shadow: 0 2px 4px rgba(0, 0, 0, .3); }
.legend { position: absolute; top: 30px; right: 30px; border-radius: 4px; box-shadow: 0 0 12px rgba(0, 0, 0, .12); }
.zoom { position: absolute; right: 30px; bottom: 60px; }
.zoom .map-button + .map-button { border-top: 2px solid #454545; }
.attribution {
  position: absolute;
  left: 0;
  right: 0;
  bottom: 0;
  display: flex;
  justify-content: space-between;
  padding: 0 11px 0 9px;
  background: rgba(36, 36, 36, .8);
  color: #d4d4d4;
  font-size: 25px;
  line-height: 32px;
}
.attribution a { color: inherit; text-decoration: none; }

.charts { grid-area: charts; position: relative; display: flex; flex-direction: column; }
.chart { display: block; width: 100%; min-height: 0; }
.chart text { fill: #fff; font-size: 22px; }
.grid, .axis, .base { fill: none; stroke-width: 2px; }
.grid { stroke: #444; stroke-dasharray: 6 6; }
.axis { stroke: #6e6e6e; }
.base { stroke: rgba(150, 150, 150, .5); }
.ylabels { text-anchor: end; }
.xlabels { text-anchor: middle; }
.chart .ytitle { font-size: 25px; font-weight: 700; text-anchor: middle; }
.countries::after, .charts::after { content: ""; position: absolute; height: 2px; bottom: -2px; background: #2b2b2b; }
.countries::after { left: 24px; right: 24px; }
.charts::after { left: 32px; width: 157px; }
```
